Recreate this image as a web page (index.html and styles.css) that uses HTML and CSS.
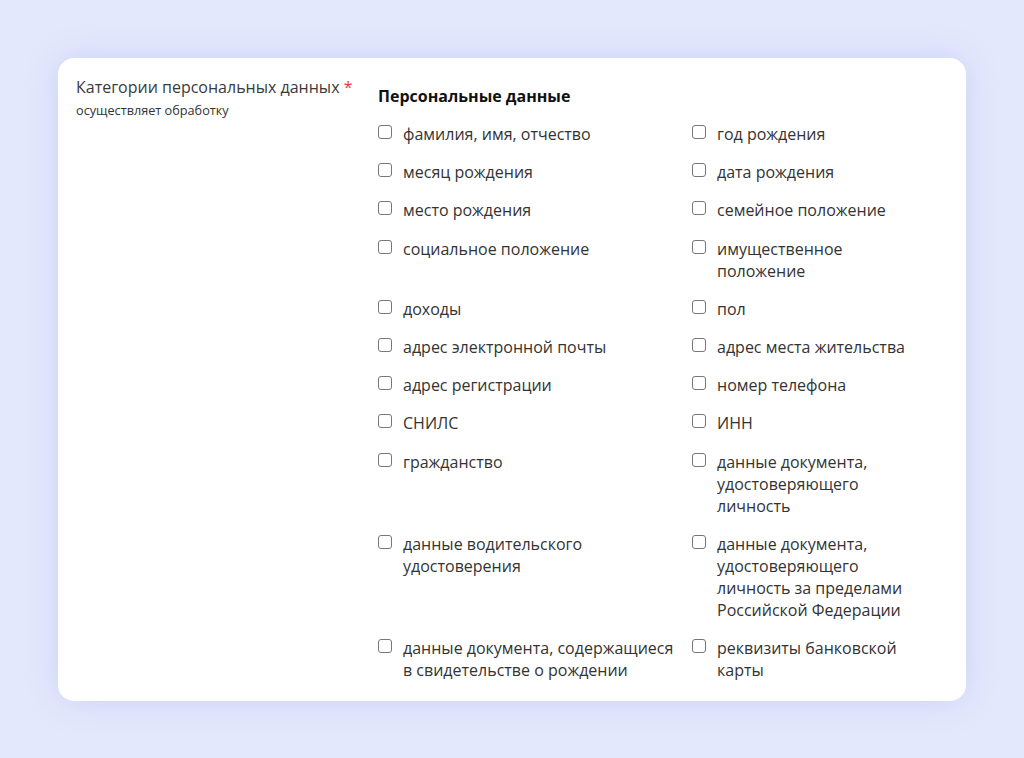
FILE: index.html
```html
<!DOCTYPE html>
<html lang="ru">

<head>
    <meta charset="UTF-8">
    <meta name="viewport" content="width=device-width, initial-scale=1.0">
    <title>Категории персональных данных</title>
    <link rel="stylesheet" href="styles.css">
</head>

<body>
    <div class="card">
        <div class="field_label">
            <div class="title">Категории персональных данных <span class="req">*</span></div>
            <div class="hint">осуществляет обработку</div>
        </div>
        <div class="field_body">
            <div class="group_title">Персональные данные</div>
            <div class="options">
                <label class="opt"><span class="box"></span><span>фамилия, имя, отчество</span></label>
                <label class="opt"><span class="box"></span><span>год рождения</span></label>
                <label class="opt"><span class="box"></span><span>месяц рождения</span></label>
                <label class="opt"><span class="box"></span><span>дата рождения</span></label>
                <label class="opt"><span class="box"></span><span>место рождения</span></label>
                <label class="opt"><span class="box"></span><span>семейное положение</span></label>
                <label class="opt"><span class="box"></span><span>социальное положение</span></label>
                <label class="opt"><span class="box"></span><span>имущественное положение</span></label>
                <label class="opt"><span class="box"></span><span>доходы</span></label>
                <label class="opt"><span class="box"></span><span>пол</span></label>
                <label class="opt"><span class="box"></span><span>адрес электронной почты</span></label>
                <label class="opt"><span class="box"></span><span>адрес места жительства</span></label>
                <label class="opt"><span class="box"></span><span>адрес регистрации</span></label>
                <label class="opt"><span class="box"></span><span>номер телефона</span></label>
                <label class="opt"><span class="box"></span><span>СНИЛС</span></label>
                <label class="opt"><span class="box"></span><span>ИНН</span></label>
                <label class="opt"><span class="box"></span><span>гражданство</span></label>
                <label class="opt"><span class="box"></span><span>данные документа, удостоверяющего личность</span></label>
                <label class="opt"><span class="box"></span><span>данные водительского удостоверения</span></label>
                <label class="opt"><span class="box"></span><span>данные документа, удостоверяющего личность за пределами Российской Федерации</span></label>
                <label class="opt"><span class="box"></span><span>данные документа, содержащиеся в свидетельстве о рождении</span></label>
                <label class="opt"><span class="box"></span><span>реквизиты банковской карты</span></label>
            </div>
        </div>
    </div>
</body>

</html>
```

FILE: styles.css
```css
* {
    margin: 0;
    padding: 0;
    box-sizing: border-box;
}

body {
    background: #e4e8fc;
    font-family: "Open Sans", "Noto Sans", sans-serif;
    color: #333;
    padding: 58px;
}

.card {
    width: 908px;
    background: #fff;
    border-radius: 16px;
    box-shadow: 0 0 30px rgba(170, 185, 245, 0.45);
    padding: 18px 18px 20px;
    display: flex;
}

.field_label {
    width: 302px;
    flex-shrink: 0;
}

.field_label .title {
    font-size: 16px;
    line-height: 22px;
    color: #3a3a3a;
}

.field_label .req {
    color: #e53935;
}

.field_label .hint {
    font-size: 12.7px;
    line-height: 24px;
    color: #333;
}

.field_body {
    padding-top: 9px;
}

.group_title {
    font-size: 16px;
    font-weight: 700;
    line-height: 22px;
    color: #111;
    margin-bottom: 16px;
}

.options {
    display: grid;
    grid-template-columns: 300px 230px;
    column-gap: 14px;
    row-gap: 16.2px;
}

.opt {
    display: flex;
    align-items: flex-start;
    font-size: 16px;
    line-height: 22px;
    color: #333;
    cursor: pointer;
}

.opt .box {
    width: 14px;
    height: 14px;
    border: 1.5px solid #777;
    border-radius: 3px;
    margin-top: 2px;
    margin-right: 11px;
    flex-shrink: 0;
}
```
